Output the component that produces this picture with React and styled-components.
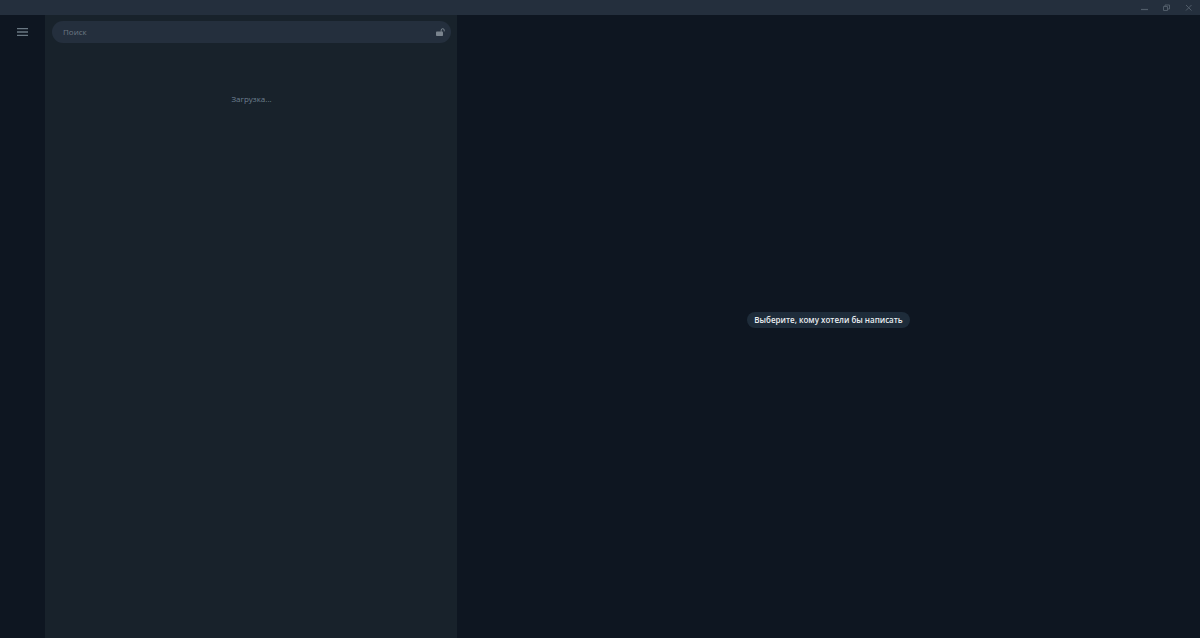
import { useState } from 'react';
import styled, { createGlobalStyle } from 'styled-components';

const GlobalStyle = createGlobalStyle`
  * {
    box-sizing: border-box;
  }

  body {
    margin: 0;
    background-color: #0e1621;
    font-family: 'Open Sans', 'Noto Sans', sans-serif;
    font-size: 8px;
  }

  button {
    padding: 0;
    border: none;
    background: none;
    cursor: pointer;
  }
`;

const Window = styled.div`
  display: flex;
  flex-direction: column;
  min-height: 100vh;
`;

const TitleBar = styled.header`
  display: flex;
  justify-content: flex-end;
  height: 15px;
  padding-right: 1px;
  background-color: #242f3d;
`;

const WindowButton = styled.button`
  display: flex;
  align-items: center;
  justify-content: center;
  width: 22px;
  color: #505c69;

  &:hover {
    background-color: #2f3b4a;
  }
`;

const Body = styled.div`
  display: flex;
  flex: 1;
`;

const Rail = styled.nav`
  flex: 0 0 45px;
  background-color: #0e1621;
`;

const MenuButton = styled.button`
  display: flex;
  align-items: center;
  justify-content: center;
  width: 100%;
  height: 34px;
  color: #6a7883;
`;

const ChatList = styled.aside`
  flex: 0 0 412px;
  padding: 6px 6px 6px 7px;
  background-color: #18222b;
`;

const SearchBar = styled.div`
  display: flex;
  align-items: center;
  height: 22px;
  padding: 0 6px 0 11px;
  border-radius: 11px;
  background-color: #242f3d;
`;

const SearchInput = styled.input`
  flex: 1;
  min-width: 0;
  height: 22px;
  padding: 0 0 2px;
  border: none;
  outline: none;
  background: transparent;
  color: #f5f5f5;
  font: inherit;

  &::placeholder {
    color: #6d7883;
    opacity: 1;
  }
`;

const LockButton = styled.button`
  display: flex;
  color: #7a848e;
`;

const Loading = styled.p`
  margin: 50px 0 0;
  color: #6d7f8f;
  line-height: 12px;
  text-align: center;
`;

const ChatArea = styled.main`
  display: flex;
  flex: 1;
  align-items: center;
  justify-content: center;
  padding: 0 0 13px;
`;

const Hint = styled.span`
  padding: 2px 7px;
  border-radius: 8px;
  background-color: #1e2c3a;
  color: #e9edf0;
  font-weight: 600;
  line-height: 12px;
`;

function App() {
  const [query, setQuery] = useState('');

  return (
    <>
      <GlobalStyle />
      <Window>
        <TitleBar>
          <WindowButton aria-label="Свернуть">
            <svg width="9" height="9" viewBox="0 0 9 9" fill="none" stroke="currentColor">
              <path d="M1 6.5h7" strokeWidth="1.2" />
            </svg>
          </WindowButton>
          <WindowButton aria-label="Развернуть">
            <svg width="9" height="9" viewBox="0 0 9 9" fill="none" stroke="currentColor">
              <path d="M1.5 3.5h4v4h-4z M3 3.5v-1.5h4.5v4h-2" />
            </svg>
          </WindowButton>
          <WindowButton aria-label="Закрыть">
            <svg width="9" height="9" viewBox="0 0 9 9" fill="none" stroke="currentColor">
              <path d="M2 2l5.5 5.5M7.5 2l-5.5 5.5" />
            </svg>
          </WindowButton>
        </TitleBar>

        <Body>
          <Rail>
            <MenuButton aria-label="Меню">
              <svg width="11" height="8" viewBox="0 0 11 8" fill="none" stroke="currentColor">
                <path d="M0 .7h11M0 4h11M0 7.3h11" strokeWidth="1.3" />
              </svg>
            </MenuButton>
          </Rail>

          <ChatList>
            <SearchBar>
              <SearchInput
                type="text"
                aria-label="Поиск"
                placeholder="Поиск"
                value={query}
                onChange={(e) => setQuery(e.target.value)}
              />
              <LockButton aria-label="Заблокировать">
                <svg width="9" height="9" viewBox="0 0 9 9" fill="none" stroke="currentColor">
                  <rect x="0" y="3.5" width="7" height="4.5" rx=".8" fill="currentColor" stroke="none" />
                  <path d="M5.2 3.8V2.2a1.5 1.5 0 0 1 3 0v1.2" />
                </svg>
              </LockButton>
            </SearchBar>
            <Loading>Загрузка...</Loading>
          </ChatList>

          <ChatArea>
            <Hint>Выберите, кому хотели бы написать</Hint>
          </ChatArea>
        </Body>
      </Window>
    </>
  );
}

export default App;
